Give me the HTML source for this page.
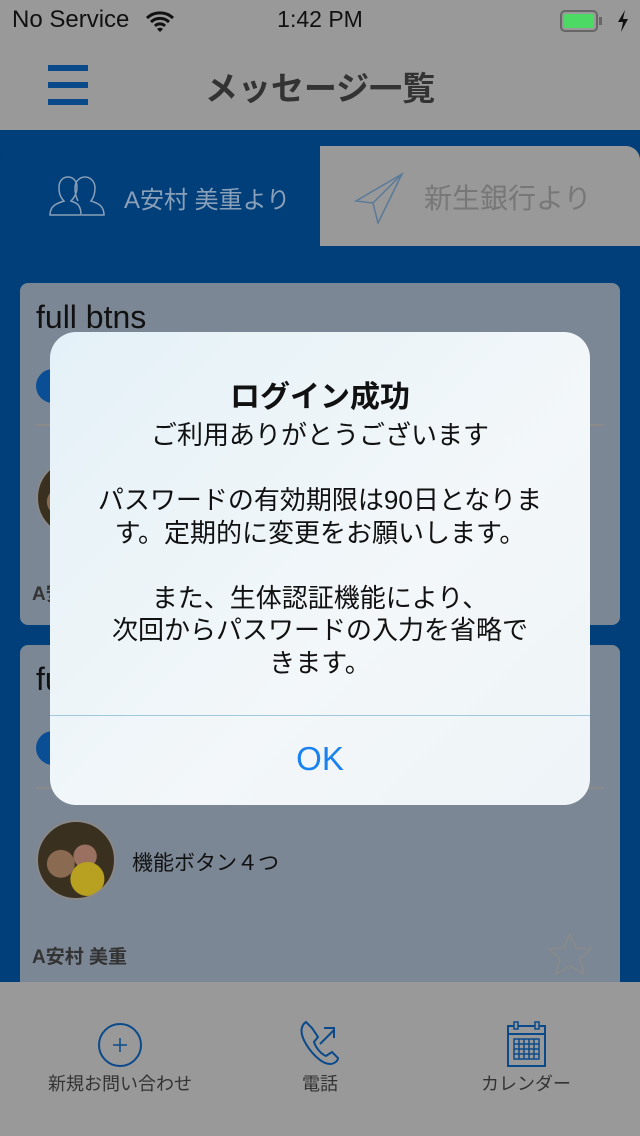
<!DOCTYPE html>
<html><head><meta charset="utf-8"><style>
*{margin:0;padding:0;box-sizing:border-box}
body{width:640px;height:1136px;overflow:hidden;position:relative;background:#003f7a;font-family:"Liberation Sans","Noto Sans CJK JP",sans-serif}
.abs{position:absolute}
.top{left:0;top:0;width:640px;height:130px;background:#999}
.card{left:20px;width:600px;background:#7b8794;border-radius:8px}
.pill{background:#0a4f95;border-radius:17px}
.div{height:2px;background:#8a8a8a}
.av{width:80px;height:80px;border-radius:50%;border:2px solid #888;background:radial-gradient(circle at 30% 55%,#8a6a50 0 20%,transparent 21%),radial-gradient(circle at 65% 75%,#b8a020 0 22%,transparent 23%),radial-gradient(circle at 62% 45%,#9a7060 0 18%,transparent 19%),#3a3020}
.bottom{left:0;top:982px;width:640px;height:154px;background:#999}
.lbl{font-size:18px;color:#333;text-align:center}
.dlg{left:50px;top:332px;width:540px;height:473px;border-radius:26px;background:linear-gradient(135deg,#e4f1f8,#f3f7f9 60%,#eef4f8);text-align:center;color:#111}
</style></head><body>
<div class="abs top"></div>
<div class="abs" style="left:12px;top:6px;font-size:24px;color:#111">No Service</div>
<svg class="abs" style="left:145px;top:10px" width="30" height="22" viewBox="0 0 30 22"><path d="M2 8a19 19 0 0 1 26 0M6 12a13 13 0 0 1 18 0M10 16a7 7 0 0 1 10 0" stroke="#111" stroke-width="3" fill="none"/><path d="M12 19l3 3 3-3a4 4 0 0 0-6 0z" fill="#111"/></svg>
<div class="abs" style="left:0;width:640px;top:6px;text-align:center;font-size:23px;color:#111">1:42 PM</div>
<div class="abs" style="left:560px;top:10px;width:38px;height:22px;border:2px solid #666;border-radius:5px;padding:2px"><div style="width:100%;height:100%;background:#4cd964;border-radius:2px"></div></div>
<div class="abs" style="left:599px;top:17px;width:3px;height:8px;background:#666"></div>
<svg class="abs" style="left:616px;top:10px" width="14" height="22" viewBox="0 0 14 22"><path d="M9 0L2 12h5l-2 10 7-13H7z" fill="#111"/></svg>
<div class="abs" style="left:48px;top:65px;width:40px;height:6px;background:#0a4a8a"></div>
<div class="abs" style="left:48px;top:82px;width:40px;height:6px;background:#0a4a8a"></div>
<div class="abs" style="left:48px;top:99px;width:40px;height:6px;background:#0a4a8a"></div>
<div class="abs" style="left:0;width:640px;top:62px;text-align:center;font-size:33px;font-weight:bold;color:#333">メッセージ一覧</div>
<div class="abs" style="left:0;top:146px;width:320px;height:100px;background:#003f7a;border-radius:14px 0 0 0"></div>
<div class="abs" style="left:320px;top:146px;width:320px;height:100px;background:#999;border-radius:0 14px 0 0"></div>
<svg class="abs" style="left:48px;top:173px" width="62" height="46" viewBox="0 0 62 46"><g fill="none" stroke="#8aa0b8" stroke-width="1.5"><path d="M2 42c0-10 8-12 14-14-4-4-5-8-5-14 0-6 4-10 9-10s9 4 9 10c0 6-2 10-6 14 6 2 10 4 10 14z"/><path d="M30 28c-2-4-3-8-3-13 0-7 5-11 10-11s10 4 10 11c0 5-1 9-4 13 6 2 13 4 13 14H34"/></g></svg>
<div class="abs" style="left:124px;top:180px;font-size:24px;color:#8aa0b8">A安村 美重より</div>
<svg class="abs" style="left:354px;top:172px" width="50" height="52" viewBox="0 0 50 52"><path d="M48 2L2 29l17 2 5 20z M19 31L48 2" fill="none" stroke="#5a7a9a" stroke-width="1.5"/></svg>
<div class="abs" style="left:424px;top:177px;font-size:28px;color:#777">新生銀行より</div>

<div class="abs card" style="top:283px;height:342px">
<div class="abs" style="left:16px;top:16px;font-size:32px;color:#111">full btns</div>
<div class="abs pill" style="left:16px;top:86px;width:120px;height:34px"></div>
<div class="abs div" style="left:16px;top:141px;width:568px"></div>
<div class="abs av" style="left:16px;top:175px"></div>
<div class="abs" style="left:12px;top:296px;font-size:19px;font-weight:bold;color:#333">A安村 美重</div>
</div>
<div class="abs card" style="top:645px;height:360px">
<div class="abs" style="left:16px;top:16px;font-size:32px;color:#111">full btns</div>
<div class="abs pill" style="left:16px;top:86px;width:120px;height:34px"></div>
<div class="abs div" style="left:16px;top:142px;width:568px"></div>
<div class="abs av" style="left:16px;top:175px"></div>
<div class="abs" style="left:112px;top:202px;font-size:21px;color:#111">機能ボタン４つ</div>
<div class="abs" style="left:12px;top:297px;font-size:19px;font-weight:bold;color:#333">A安村 美重</div>
<svg class="abs" style="left:527px;top:287px" width="46" height="44" viewBox="0 0 46 44"><path d="M23 2l6 14 15 1-11 10 4 15-14-8-14 8 4-15L2 17l15-1z" fill="none" stroke="#8a8a8a" stroke-width="1.5"/></svg>
</div>

<div class="abs bottom"></div>
<svg class="abs" style="left:97px;top:1022px" width="46" height="46" viewBox="0 0 46 46"><circle cx="23" cy="23" r="21" fill="none" stroke="#0a4a8a" stroke-width="2"/><path d="M23 16v14M16 23h14" stroke="#0a4a8a" stroke-width="1.5"/></svg>
<div class="abs lbl" style="left:20px;width:200px;top:1070px">新規お問い合わせ</div>
<svg class="abs" style="left:298px;top:1020px" width="44" height="48" viewBox="0 0 44 48"><path d="M8 2c-6 4-6 12 0 22s16 20 24 20c4 0 8-3 8-6l-6-6-6 4c-5-2-10-8-12-14l4-5-6-9z" fill="none" stroke="#0a4a8a" stroke-width="2"/><path d="M22 24l14-14M26 8h10v10" fill="none" stroke="#0a4a8a" stroke-width="2"/></svg>
<div class="abs lbl" style="left:220px;width:200px;top:1070px">電話</div>
<svg class="abs" style="left:507px;top:1020px" width="40" height="48" viewBox="0 0 40 48"><rect x="1" y="6" width="37" height="40" fill="none" stroke="#0a4a8a" stroke-width="2"/><path d="M1 14h37" stroke="#0a4a8a" stroke-width="2"/><rect x="7" y="2" width="4" height="7" fill="#999" stroke="#0a4a8a" stroke-width="1.5"/><rect x="28" y="2" width="4" height="7" fill="#999" stroke="#0a4a8a" stroke-width="1.5"/><path d="M7 19h25v20H7zM7 24h25M7 29h25M7 34h25M12 19v20M17 19v20M22 19v20M27 19v20" fill="none" stroke="#0a4a8a" stroke-width="1.5"/></svg>
<div class="abs lbl" style="left:426px;width:200px;top:1070px">カレンダー</div>

<div class="abs dlg">
<div style="position:absolute;top:40px;width:100%;font-size:30px;font-weight:bold">ログイン成功</div>
<div style="position:absolute;top:87px;width:100%;font-size:26px;line-height:32.5px;white-space:nowrap">ご利用ありがとうございます<br><br>パスワードの有効期限は90日となりま<br>す。定期的に変更をお願いします。<br><br>また、生体認証機能により、<br>次回からパスワードの入力を省略で<br>きます。</div>
<div style="position:absolute;top:383px;left:0;width:100%;height:1px;background:#9fc8e0"></div>
<div style="position:absolute;top:408px;width:100%;font-size:33px;color:#1a82f0">OK</div>
</div>
</body></html>
